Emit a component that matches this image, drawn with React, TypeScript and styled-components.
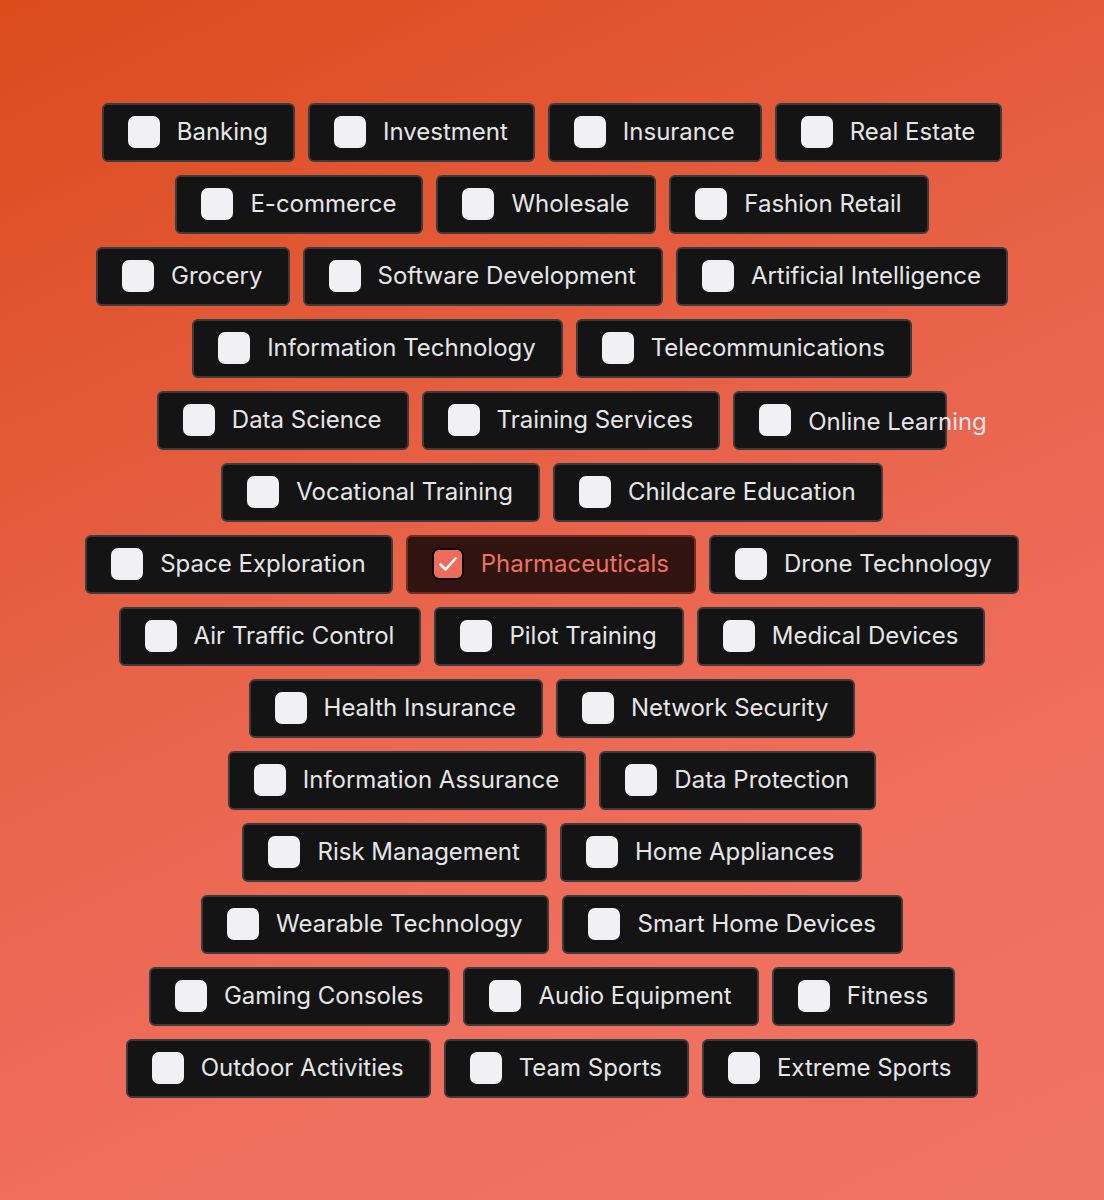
import React from 'react';
import styled, { createGlobalStyle, css } from 'styled-components';

const Global = createGlobalStyle`
  html, body {
    margin: 0;
    padding: 0;
  }
  body {
    font-family: Inter, "Noto Sans", sans-serif;
  }
`;

const Page = styled.div`
  width: 1104px;
  height: 1200px;
  box-sizing: border-box;
  background: linear-gradient(155deg, #db4b1c 0%, #e8634a 45%, #f0705f 75%, #f07262 100%);
  display: flex;
  flex-direction: column;
  align-items: center;
  justify-content: center;
  gap: 13px;
`;

const Row = styled.div`
  display: flex;
  justify-content: center;
  gap: 13px;
`;

const Chip = styled.label<{ checked?: boolean; fixedWidth?: number }>`
  box-sizing: border-box;
  height: 59px;
  display: flex;
  align-items: center;
  gap: 17px;
  padding: 0 25px 0 24px;
  border-radius: 6px;
  border: 2px solid #3b3a3c;
  background: #141414;
  color: #e6e6e8;
  font-size: 24px;
  white-space: nowrap;
  cursor: pointer;
  ${({ fixedWidth }) =>
    fixedWidth &&
    css`
      width: ${fixedWidth}px;
      overflow: visible;
    `}
  ${({ checked }) =>
    checked &&
    css`
      background: #2f1410;
      border-color: #6e2e22;
      color: #f2705f;
    `}
`;

const Box = styled.span<{ checked?: boolean }>`
  flex: none;
  width: 32px;
  height: 32px;
  box-sizing: border-box;
  border-radius: 7px;
  background: #f1f1f4;
  display: flex;
  align-items: center;
  justify-content: center;
  ${({ checked }) =>
    checked &&
    css`
      background: #ef6b5c;
      border: 2px solid #050505;
    `}
`;

const Text = styled.span<{ shifted?: boolean }>`
  line-height: 1;
  ${({ shifted }) =>
    shifted &&
    css`
      position: relative;
      top: 2px;
    `}
`;

const rows: string[][] = [
  ['Banking', 'Investment', 'Insurance', 'Real Estate'],
  ['E-commerce', 'Wholesale', 'Fashion Retail'],
  ['Grocery', 'Software Development', 'Artificial Intelligence'],
  ['Information Technology', 'Telecommunications'],
  ['Data Science', 'Training Services', 'Online Learning'],
  ['Vocational Training', 'Childcare Education'],
  ['Space Exploration', 'Pharmaceuticals', 'Drone Technology'],
  ['Air Traffic Control', 'Pilot Training', 'Medical Devices'],
  ['Health Insurance', 'Network Security'],
  ['Information Assurance', 'Data Protection'],
  ['Risk Management', 'Home Appliances'],
  ['Wearable Technology', 'Smart Home Devices'],
  ['Gaming Consoles', 'Audio Equipment', 'Fitness'],
  ['Outdoor Activities', 'Team Sports', 'Extreme Sports'],
];

const Check = () => (
  <svg width="24" height="24" viewBox="0 0 24 24" fill="none" stroke="#fff" strokeWidth="2.6" strokeLinecap="round" strokeLinejoin="round">
    <path d="M4.5 12.5l5 5L19.5 6.5" />
  </svg>
);

export default function App() {
  return (
    <>
      <Global />
      <Page>
        {rows.map((row, i) => (
          <Row key={i}>
            {row.map((name) => {
              const checked = name === 'Pharmaceuticals';
              const squeezed = name === 'Online Learning';
              return (
                <Chip key={name} checked={checked} fixedWidth={squeezed ? 214 : undefined}>
                  <Box checked={checked}>{checked && <Check />}</Box>
                  <Text shifted={squeezed}>{name}</Text>
                </Chip>
              );
            })}
          </Row>
        ))}
      </Page>
    </>
  );
}
